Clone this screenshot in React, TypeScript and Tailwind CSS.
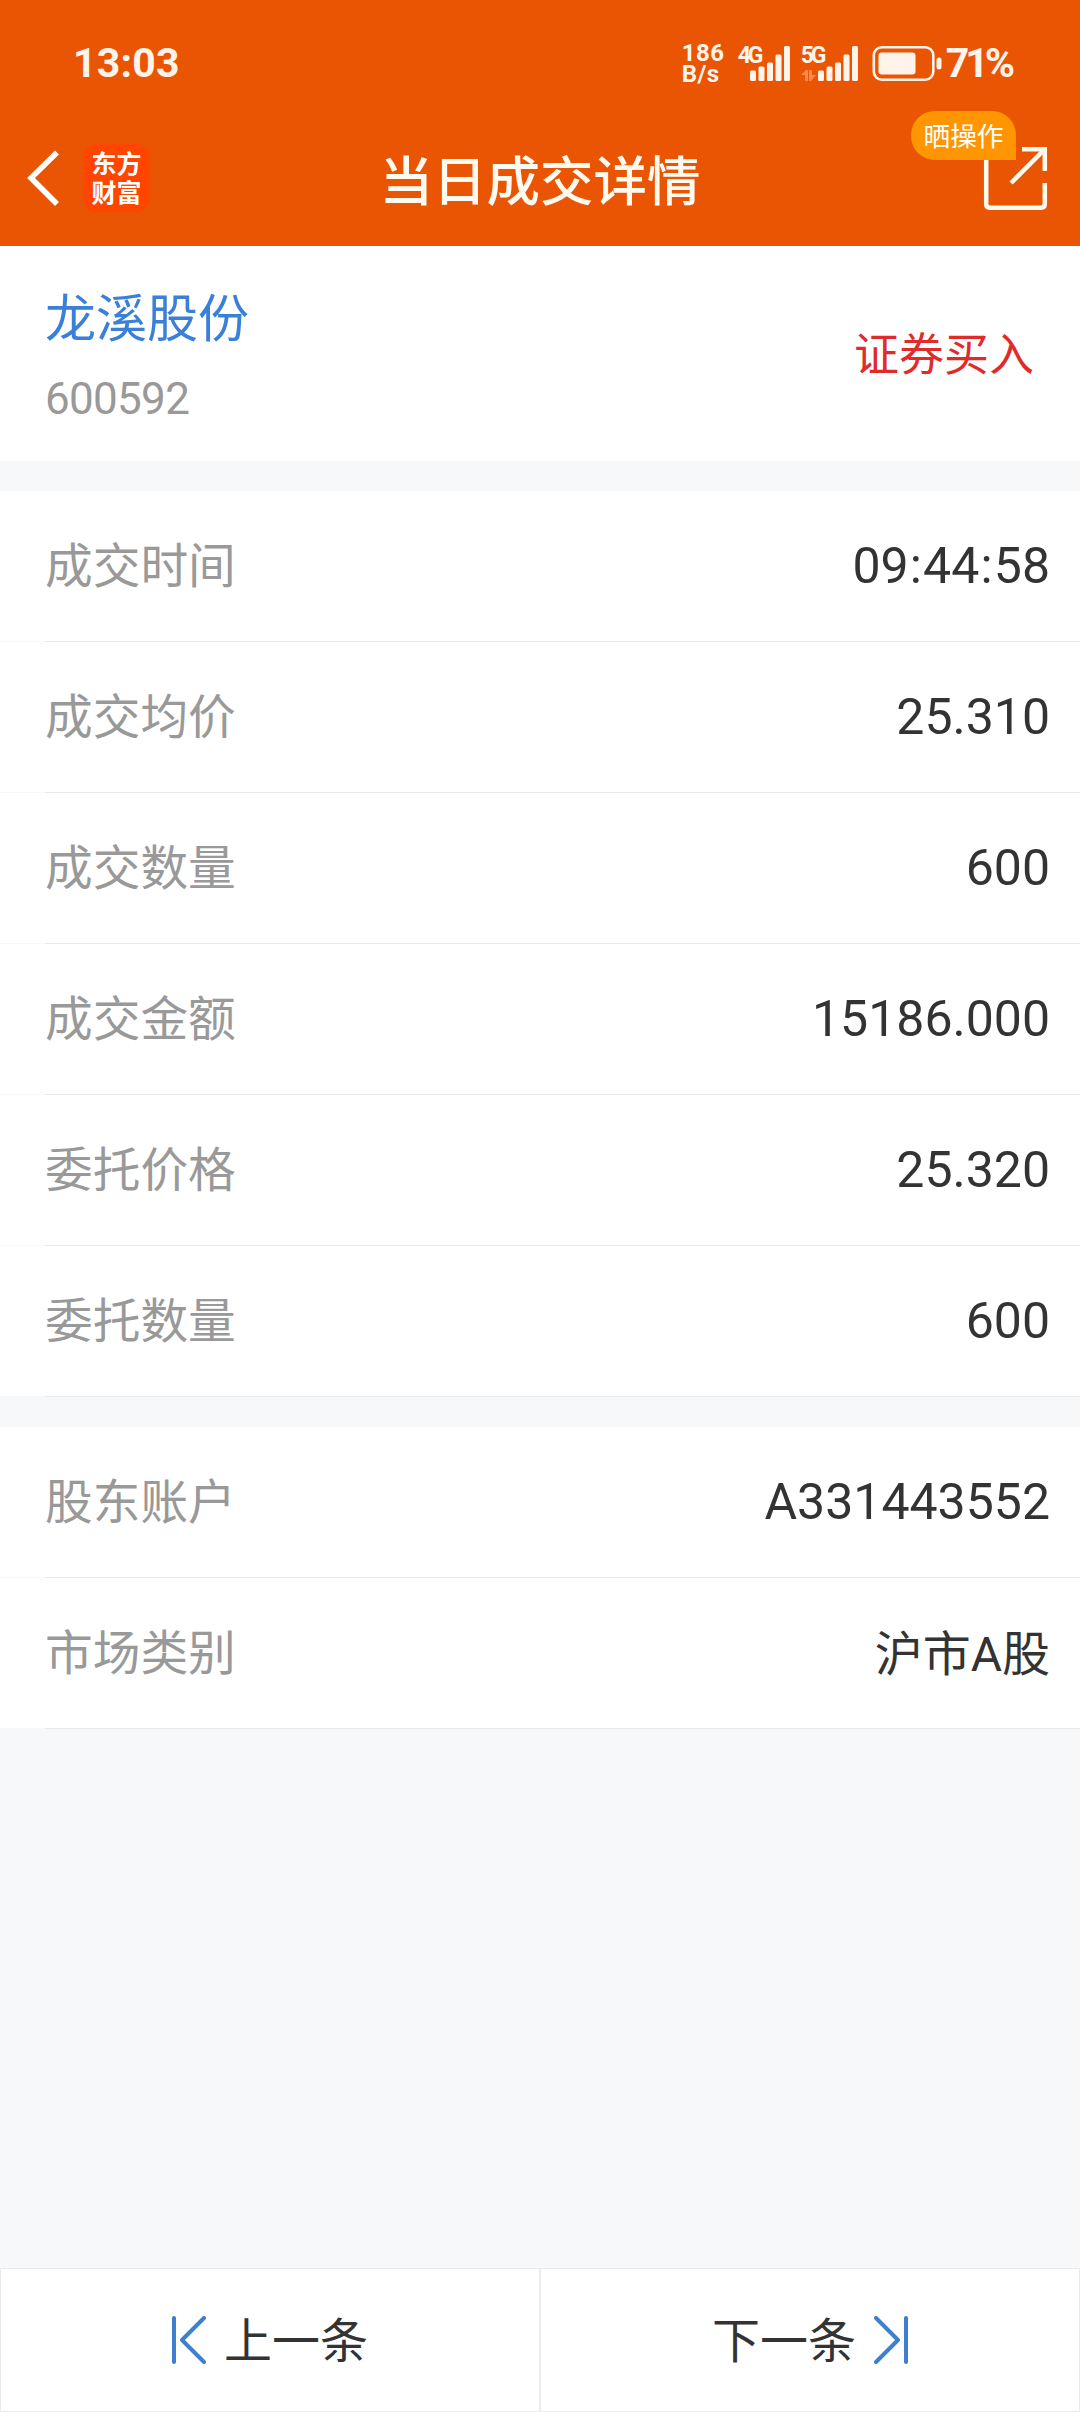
interface DetailItem {
  label: string
  value: string
}

const tradeRows: DetailItem[] = [
  { label: '成交时间', value: '09:44:58' },
  { label: '成交均价', value: '25.310' },
  { label: '成交数量', value: '600' },
  { label: '成交金额', value: '15186.000' },
  { label: '委托价格', value: '25.320' },
  { label: '委托数量', value: '600' },
]

const accountRows: DetailItem[] = [
  { label: '股东账户', value: 'A331443552' },
  { label: '市场类别', value: '沪市A股' },
]

function SignalBars() {
  return (
    <svg className="block h-[35px] w-[41px]" viewBox="0 0 41 35" fill="#fff3ea">
      <rect x="0" y="24.5" width="6" height="10.5" rx="1.5" />
      <rect x="8.5" y="20.5" width="6" height="14.5" rx="1.5" />
      <rect x="17" y="16.5" width="6" height="18.5" rx="1.5" />
      <rect x="25.5" y="8.5" width="6" height="26.5" rx="1.5" />
      <rect x="34" y="0" width="6" height="35" rx="1.5" />
    </svg>
  )
}

function StatusBar() {
  return (
    <div className="flex h-[126px] items-center justify-between pl-[73px] pr-[69px] text-[#fff3ea]">
      <span className="pt-px text-[41px] font-bold leading-none tracking-[0.2px]">13:03</span>

      <div className="flex items-center">
        {/* Network speed */}
        <div className="w-[56px] pt-[2px] text-[24px] font-bold leading-[21px] tracking-[0.5px]">
          <div>186</div>
          <div>B/s</div>
        </div>

        <div className="relative mr-[10px] flex h-[35px] w-[53px] justify-end">
          <span className="absolute left-0 top-px text-[23px] font-bold leading-[17px] tracking-[-3px]">4G</span>
          <SignalBars />
        </div>

        <div className="relative flex h-[35px] w-[58px] justify-end">
          <span className="absolute left-0 top-px text-[23px] font-bold leading-[17px] tracking-[-3px]">5G</span>
          <svg className="absolute bottom-0 left-0 h-[11px] w-[15px]" viewBox="0 0 15 11" fill="#f98a4e">
            <path d="M0 5 L5 0 H7 V11 H4 V5 Z" />
            <path d="M8 0 H11 V5 H15 L10 11 H8 Z" />
          </svg>
          <SignalBars />
        </div>

        <svg className="block h-[35px] w-[87px]" viewBox="0 0 87 35">
          <rect x="14.8" y="1.3" width="59.5" height="32.4" rx="8" fill="none" stroke="#fff3ea" strokeWidth="2.6" />
          <rect x="19.5" y="6.5" width="37" height="22" rx="3" fill="#fff3ea" />
          <rect x="77.5" y="11.5" width="5" height="12" rx="2.5" fill="#fff3ea" />
        </svg>
        <span className="pt-px text-[41px] font-bold leading-none tracking-[-4px]">71%</span>
      </div>
    </div>
  )
}

function TitleBar() {
  return (
    <div className="grid h-[120px] grid-cols-3 items-start">
      <div className="flex items-center pt-[18px]">
        <svg className="ml-[26px] block h-[56px] w-[34px]" viewBox="0 0 34 56" fill="none" stroke="#fff" strokeWidth="5.5">
          <path d="M31 2.5 L5 28 L31 54" />
        </svg>
        <div className="ml-[23px] flex h-[68px] w-[67px] flex-col items-center justify-center rounded-[14px] bg-[#ff4500] pt-px text-[25px] font-bold leading-[29px] text-white">
          <span>东方</span>
          <span>财富</span>
        </div>
      </div>

      <h1 className="whitespace-nowrap pt-[17px] text-center text-[53.5px] font-medium leading-[80px] text-[#fffaf0]">
        当日成交详情
      </h1>

      <div className="relative flex justify-end pr-[32px] pt-[20px]">
        <svg className="block h-[66px] w-[66px]" viewBox="0 0 66 66" fill="none" stroke="#fffaf0" strokeWidth="4.5">
          <path d="M4.2 6 V58 Q4.2 61.7 8 61.7 H59 Q62.8 61.7 62.8 58 V37" />
          <path d="M40 3.2 H62.8 V25" />
          <path d="M29 37 L62 4" />
        </svg>
        <span className="absolute right-[64px] top-[-15px] flex h-[49px] w-[105px] items-center justify-center rounded-[24px] rounded-br-none bg-[#ff9500] pt-[3px] text-[26.7px] leading-none text-white">
          晒操作
        </span>
      </div>
    </div>
  )
}

function DetailValue({ value }: { value: string }) {
  if (value.includes('股')) {
    return <span className="pt-[4px] text-[48px] text-[#333333]">{value}</span>
  }

  return (
    <span className="pt-px text-[50px] text-[#333333]">
      {value.split(':').map((part, index) => (
        <span key={index}>
          {index > 0 && <span className="px-[1.2px]">:</span>}
          {part}
        </span>
      ))}
    </span>
  )
}

function DetailList({ items }: { items: DetailItem[] }) {
  return (
    <div>
      {items.map((item) => (
        <div key={item.label}>
          <div className="flex h-[150px] items-center justify-between bg-white pl-[45px] pr-[30px]">
            <span className="pt-[4px] text-[47.7px] text-[#999999]">{item.label}</span>
            <DetailValue value={item.value} />
          </div>
          <div className="ml-[45px] h-px bg-[#ebebeb]" />
        </div>
      ))}
    </div>
  )
}

export default function App() {
  return (
    <div className="flex h-[2412px] w-[1080px] flex-col overflow-hidden bg-[#f7f8fa] font-[Roboto,'Noto_Sans_CJK_SC',sans-serif]">
      <header className="h-[246px] bg-[#ea5504]">
        <StatusBar />
        <TitleBar />
      </header>

      {/* Stock summary */}
      <section className="flex h-[215px] items-center justify-between bg-white pl-[45px] pr-[46px]">
        <div className="pt-[10px]">
          <div className="text-[51px] leading-[80px] text-[#3a80d8]">龙溪股份</div>
          <div className="text-[44px] leading-[78px] tracking-[-0.7px] text-[#999999]">600592</div>
        </div>
        <span className="pt-[5px] text-[45px] text-[#e12a2a]">证券买入</span>
      </section>

      <main className="mt-[30px] flex flex-col gap-[30px]">
        <DetailList items={tradeRows} />
        <DetailList items={accountRows} />
      </main>

      <footer className="mt-auto grid h-[144px] grid-cols-2 text-[48px] text-[#333333]">
        <button className="flex items-center justify-center gap-[18px] border border-[#ebebeb] bg-white">
          <svg className="block h-[48px] w-[34px]" viewBox="0 0 34 48" fill="none" stroke="#3f7fcf" strokeWidth="4" strokeLinecap="round" strokeLinejoin="round">
            <path d="M2 2 V46" />
            <path d="M32 2 L10 24 L32 46" />
          </svg>
          <span className="pt-[3px]">上一条</span>
        </button>
        <button className="flex items-center justify-center gap-[18px] border border-[#ebebeb] bg-white">
          <span className="pt-[3px]">下一条</span>
          <svg className="block h-[48px] w-[34px]" viewBox="0 0 34 48" fill="none" stroke="#3f7fcf" strokeWidth="4" strokeLinecap="round" strokeLinejoin="round">
            <path d="M32 2 V46" />
            <path d="M2 2 L24 24 L2 46" />
          </svg>
        </button>
      </footer>
    </div>
  )
}
